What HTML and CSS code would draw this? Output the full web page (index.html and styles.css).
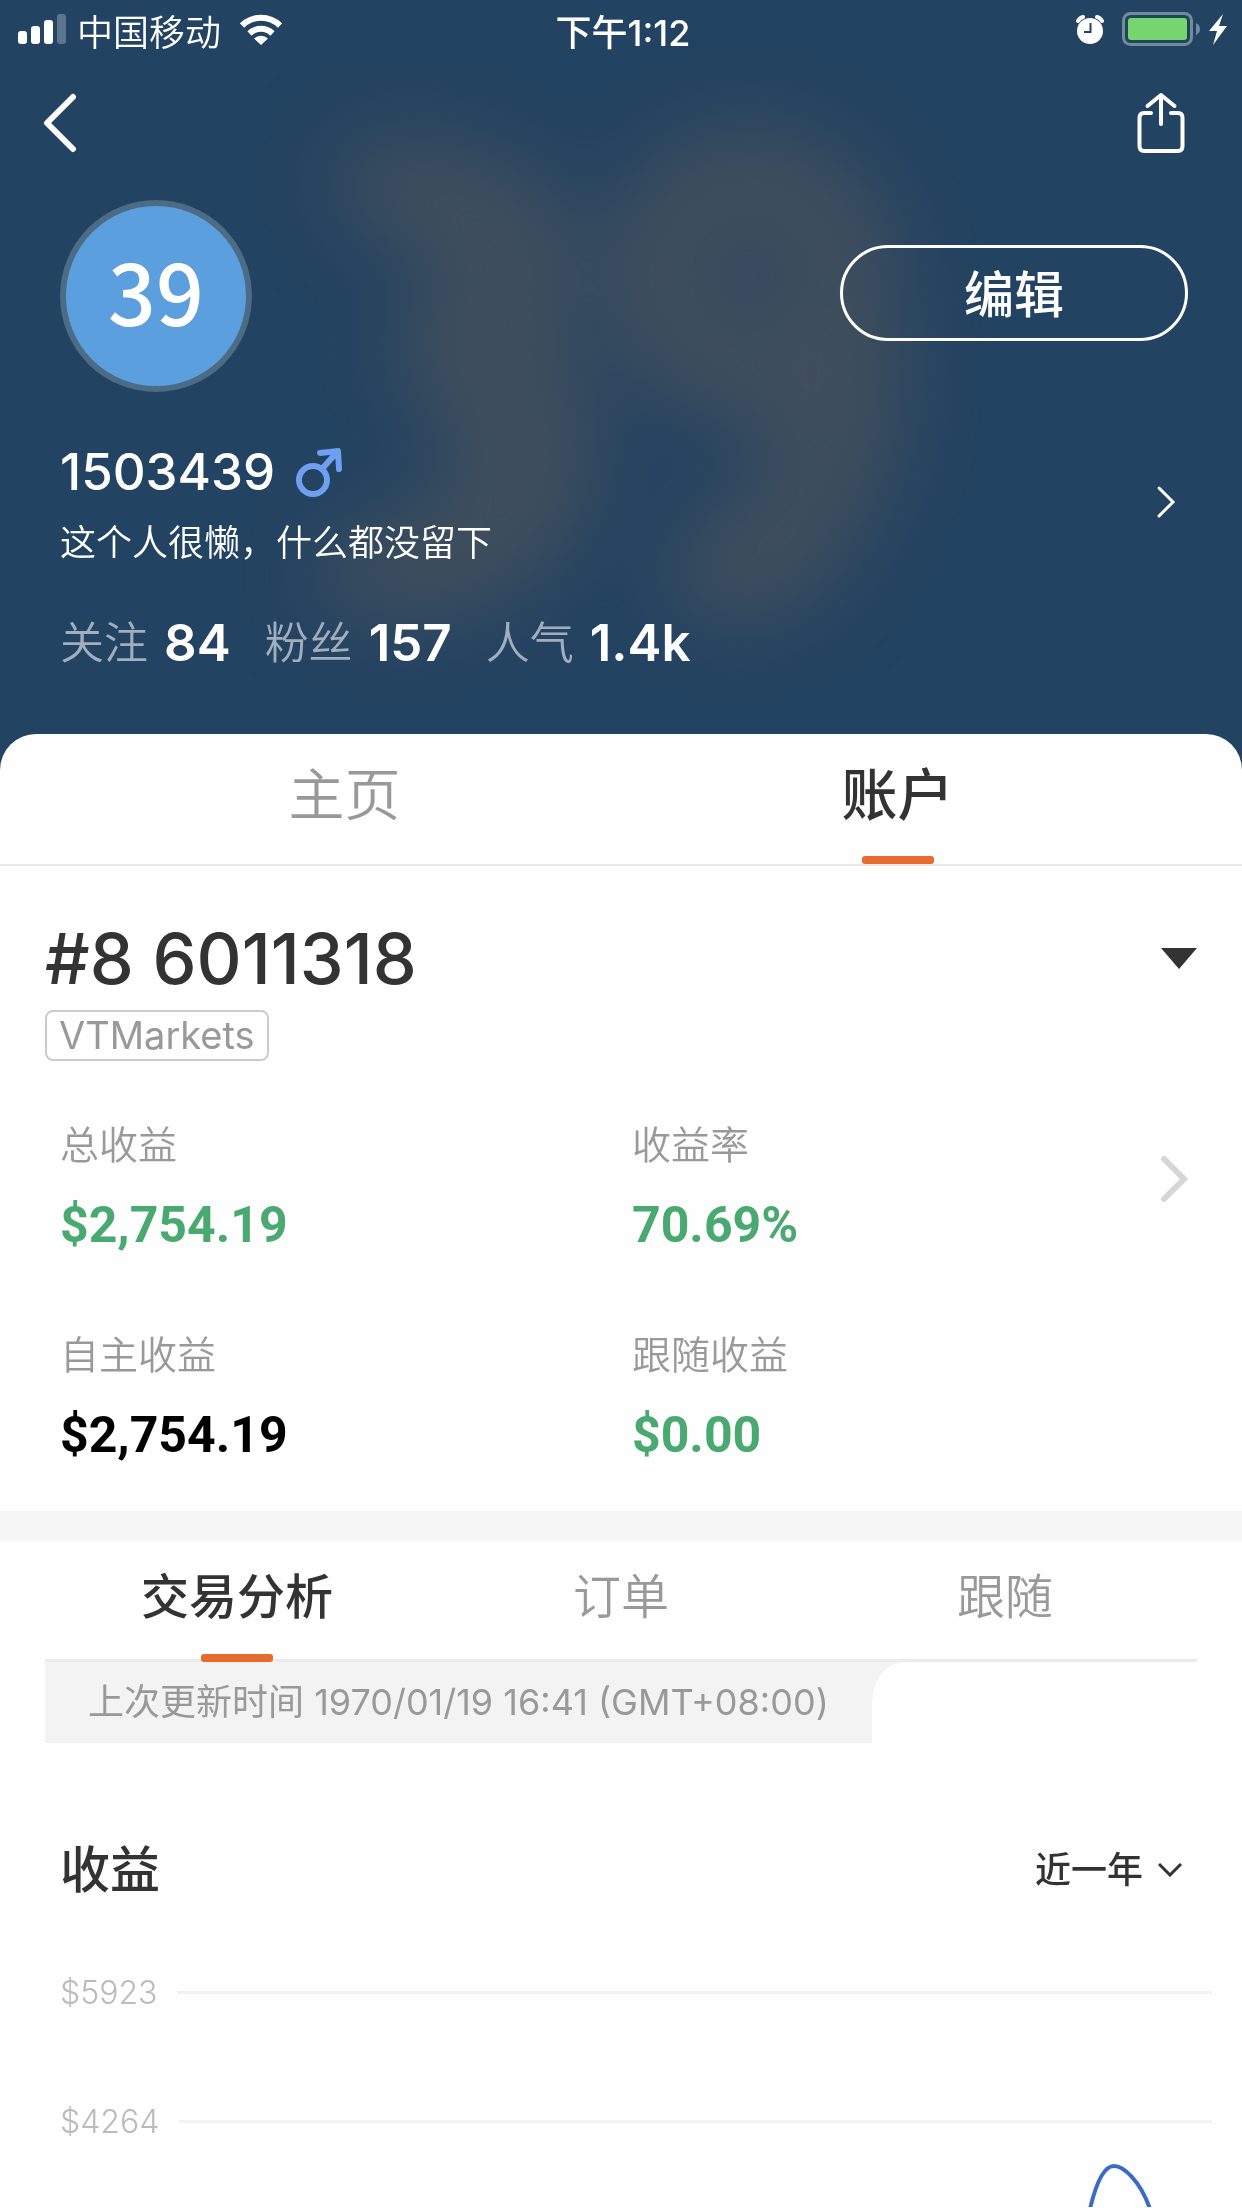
FILE: index.html
```html
<!DOCTYPE html>
<html lang="zh-CN">
<head>
<meta charset="utf-8">
<meta name="viewport" content="width=device-width, initial-scale=1">
<title>1503439</title>
<link rel="stylesheet" href="styles.css">
</head>
<body>
<header class="hero">
  <!-- soft backdrop made of blurred blobs -->
  <svg class="hero-art" viewBox="0 0 1242 776" preserveAspectRatio="xMidYMin slice" aria-hidden="true">
    <defs><filter id="soft" x="-30%" y="-30%" width="160%" height="160%" color-interpolation-filters="sRGB"><feGaussianBlur stdDeviation="42"/></filter></defs>
    <g filter="url(#soft)" fill="#414f5c">
      <ellipse cx="430" cy="195" rx="100" ry="56" transform="rotate(12 430 195)"/>
      <ellipse cx="505" cy="270" rx="70" ry="110"/>
      <ellipse cx="475" cy="350" rx="84" ry="60"/>
      <ellipse cx="520" cy="450" rx="76" ry="120"/>
      <ellipse cx="430" cy="565" rx="118" ry="54" transform="rotate(-8 430 565)"/>
      <circle cx="750" cy="275" r="92" fill="none" stroke="#414f5c" stroke-width="112"/>
      <ellipse cx="835" cy="400" rx="66" ry="150" transform="rotate(6 835 400)"/>
      <ellipse cx="760" cy="555" rx="96" ry="62" transform="rotate(-24 760 555)"/>
    </g>
  </svg>

  <div class="status">
    <div class="status-side">
      <svg width="48" height="32" viewBox="0 0 48 32" aria-hidden="true">
        <g fill="#fff"><rect x="0" y="17" width="9" height="13" rx="3"/><rect x="13" y="12" width="9" height="18" rx="3"/><rect x="26" y="6" width="9" height="24" rx="3"/></g>
        <rect x="39" y="0" width="9" height="30" rx="3" fill="#5c7690"/>
      </svg>
      <span class="carrier">中国移动</span>
      <svg width="42" height="32" viewBox="0 0 42 32" aria-hidden="true">
        <g fill="none" stroke="#fff" stroke-width="6"><path d="M2 11.500a27 27 0 0 1 38 0"/><path d="M9.500 19.500a16.500 16.500 0 0 1 23 0"/></g>
        <path fill="#fff" d="M14 24.500a10 10 0 0 1 14 0L21 31z"/>
      </svg>
    </div>
    <time class="clock">下午1:12</time>
    <div class="status-side status-right">
      <svg width="28" height="30" viewBox="0 0 28 30" aria-hidden="true">
        <circle cx="14" cy="16" r="13" fill="#fff"/>
        <path d="M2 6a8 8 0 0 1 5-4M26 6a8 8 0 0 0-5-4" stroke="#fff" stroke-width="4" stroke-linecap="round"/>
        <path d="M14.500 8v9H8" fill="none" stroke="#234362" stroke-width="2"/>
      </svg>
      <svg width="106" height="36" viewBox="0 0 106 36" aria-hidden="true">
        <rect x="1.500" y="1.500" width="68" height="31" rx="7" fill="#1c4a53" stroke="#7489a2" stroke-width="3"/>
        <rect x="6" y="6" width="59" height="22" rx="3" fill="#78d672"/>
        <path d="M74 11q4 2 4 6t-4 6z" fill="#7489a2"/>
        <path d="M101 2 87 19h8l-4 14 14-19h-8z" fill="#fff"/>
      </svg>
    </div>
  </div>

  <nav class="nav">
    <button class="icon-button" type="button" aria-label="返回">
      <svg width="34" height="60" viewBox="0 0 34 60" aria-hidden="true"><path d="M31 4 5 30l26 26" fill="none" stroke="#fff" stroke-width="6" stroke-linecap="round" stroke-linejoin="round"/></svg>
    </button>
    <button class="icon-button" type="button" aria-label="分享">
      <svg width="48" height="62" viewBox="0 0 48 62" aria-hidden="true"><path d="M14 21H7q-4.500 0-4.500 5v28q0 5 4.500 5h34q4.500 0 4.500-5V26q0-5-4.500-5h-7M24 32V3M10.500 14 24 3l13.500 11" fill="none" stroke="#fff" stroke-width="4" stroke-linecap="round" stroke-linejoin="round"/></svg>
    </button>
  </nav>

  <div class="profile-top">
    <div class="avatar">39</div>
    <button class="edit" type="button">编辑</button>
  </div>

  <a class="identity" href="#profile">
    <div>
      <h1 class="name">1503439
        <svg width="48" height="50" viewBox="0 0 48 50" role="img" aria-label="男"><g fill="none" stroke="#6f9ff0" stroke-width="6" stroke-linecap="round" stroke-linejoin="round"><circle cx="18" cy="33" r="14"/><path d="M27 22 42 5M25 6 43 4l1 18"/></g></svg>
      </h1>
      <p class="bio">这个人很懒，什么都没留下</p>
    </div>
    <svg width="20" height="40" viewBox="0 0 20 40" aria-hidden="true"><path d="M3 3 17 17 3 31" fill="none" stroke="#fff" stroke-width="3" stroke-linecap="round"/></svg>
  </a>

  <ul class="counts">
    <li>关注 <b>84</b></li>
    <li>粉丝 <b>157</b></li>
    <li>人气 <b>1.4k</b></li>
  </ul>
</header>

<main class="sheet">
  <nav class="tabs main-tabs">
    <a href="#home">主页</a>
    <a class="active" href="#account" aria-current="page">账户</a>
  </nav>

  <section class="account">
    <button class="account-picker" type="button">
      <span>#8 6011318</span>
      <svg width="36" height="22" viewBox="0 0 36 22" aria-hidden="true"><path d="M0 0h36L18 21z" fill="#333"/></svg>
    </button>
    <span class="broker">VTMarkets</span>
  </section>

  <section class="summary">
    <dl class="figures">
      <div><dt>总收益</dt><dd class="gain">$2,754.19</dd></div>
      <div><dt>收益率</dt><dd class="gain">70.69%</dd></div>
      <div><dt>自主收益</dt><dd>$2,754.19</dd></div>
      <div><dt>跟随收益</dt><dd class="gain">$0.00</dd></div>
    </dl>
    <a class="more" href="#details" aria-label="收益详情">
      <svg width="28" height="48" viewBox="0 0 28 48" aria-hidden="true"><path d="M4 4 24 24 4 44" fill="none" stroke="#d6d6d6" stroke-width="6" stroke-linecap="round"/></svg>
    </a>
  </section>

  <section class="analysis">
    <nav class="tabs sub-tabs">
      <a class="active" href="#analysis" aria-current="page">交易分析</a>
      <a href="#orders">订单</a>
      <a href="#follow">跟随</a>
    </nav>
    <div class="updated">
      <p>上次更新时间 1970/01/19 16:41 (GMT+08:00)</p>
      <svg width="36" height="44" viewBox="0 0 36 44" aria-hidden="true"><path d="M0 0h36C14 0 0 16 0 44z" fill="#f3f3f3"/></svg>
    </div>

    <div class="chart-head">
      <h2>收益</h2>
      <div class="range">
        <select aria-label="时间范围">
          <option>近一年</option>
        </select>
        <svg width="24" height="14" viewBox="0 0 24 14" aria-hidden="true"><path d="M1 1 12 12 23 1" fill="none" stroke="#333" stroke-width="3"/></svg>
      </div>
    </div>

    <div class="chart">
      <div class="tick"><span>$5923</span><i></i></div>
      <div class="tick"><span>$4264</span><i></i></div>
      <svg class="curve" width="64" height="44" viewBox="0 0 64 44" aria-hidden="true"><path d="M2 46C9 16 17 3 26 3s26 14 36 43" fill="none" stroke="#3b6bc6" stroke-width="4"/></svg>
    </div>
  </section>
</main>
</body>
</html>
```
FILE: styles.css
```css
* { box-sizing: border-box; }

body {
  margin: 0;
  background: #fefefe;
  color: #333;
  font-family: Inter, "Noto Sans CJK SC", sans-serif;
  font-size: 36px;
}

h1, h2, p, ul, dl, dd { margin: 0; padding: 0; }
ul { list-style: none; }
a { color: inherit; text-decoration: none; }
button, select { margin: 0; padding: 0; border: 0; background: none; color: inherit; font: inherit; }
svg { display: block; flex: none; }

/* Profile header */
.hero {
  position: relative;
  overflow: hidden;
  background: #234362;
  color: #fff;
  padding-bottom: 92px;
}

.hero > * { position: relative; }

.hero .hero-art {
  position: absolute;
  inset: 0;
  width: 100%;
  height: 100%;
}

.status {
  display: grid;
  grid-template-columns: 1fr auto 1fr;
  align-items: center;
  height: 60px;
  padding: 0 14px 0 18px;
}

.status-side { display: flex; align-items: center; gap: 11px; }
.carrier { margin-right: 8px; font-weight: 350; }
.status-right { justify-content: flex-end; gap: 18px; }
.clock { font-size: 36px; font-weight: 500; }

.nav {
  display: flex;
  justify-content: space-between;
  align-items: center;
  height: 126px;
  padding: 0 57px 0 42px;
}

.profile-top {
  display: flex;
  justify-content: space-between;
  align-items: center;
  margin-top: 14px;
  padding: 0 54px 0 60px;
}

.avatar {
  width: 192px;
  height: 192px;
  border: 6px solid #4c6b84;
  border-radius: 50%;
  background: #5b9fdf;
  font: 500 84px/168px "Noto Sans CJK SC", sans-serif;
  text-align: center;
}

.edit {
  width: 348px;
  height: 96px;
  margin-bottom: 6px;
  padding-bottom: 4px;
  border: 3px solid #fff;
  border-radius: 48px;
  font-size: 50px;
  font-weight: 500;
}

.identity {
  display: flex;
  justify-content: space-between;
  align-items: center;
  margin-top: 42px;
  padding: 0 66px 0 60px;
}

.name {
  display: flex;
  align-items: center;
  gap: 20px;
  font-size: 51px;
  font-weight: 500;
  line-height: 76px;
}

.bio { line-height: 66px; font-weight: 350; }

.counts {
  display: flex;
  gap: 34px;
  margin-top: 32px;
  padding: 0 60px;
  line-height: 70px;
}

.counts li { display: flex; align-items: center; gap: 16px; color: #a0aebd; font-size: 44px; font-weight: 350; }
.counts b { color: #fff; font-size: 51px; font-weight: 600; }

/* Sheet */
.sheet {
  margin-top: -36px;
  position: relative;
  border-radius: 36px 36px 0 0;
  background: #fefefe;
}

.tabs { display: grid; grid-auto-flow: column; grid-auto-columns: 1fr; color: #999; font-weight: 350; text-align: center; }
.tabs a { display: flex; flex-direction: column; align-items: center; justify-content: space-between; }
.tabs .active { color: #333; font-weight: 500; }
.tabs a::after { content: ""; width: 72px; height: 8px; border-radius: 3px; }
.tabs .active::after { background: #e76a2e; }

.main-tabs { height: 132px; padding: 0 68px; border-bottom: 2px solid #e8e8e8; font-size: 56px; line-height: 122px; }
.main-tabs a { height: 130px; }

.account { padding: 48px 45px 0; }

.account-picker {
  display: flex;
  justify-content: space-between;
  align-items: center;
  width: 100%;
  font-size: 70px;
  font-weight: 550;
  line-height: 90px;
}

.broker {
  display: block;
  width: fit-content;
  margin-top: 6px;
  padding: 0 12px;
  border: 2px solid #ccc;
  border-radius: 8px;
  color: #999;
  font-size: 38px;
  font-weight: 400;
  line-height: 47px;
}

.summary {
  display: flex;
  justify-content: space-between;
  padding: 54px 54px 42px 60px;
  border-bottom: 30px solid #f6f6f6;
}

.figures { flex: 1; display: grid; grid-template-columns: 52% 48%; row-gap: 66px; }
.figures dt { color: #999; font-size: 39px; font-weight: 350; line-height: 60px; }
.figures dd { margin-top: 16px; color: #000; font: 700 50px/68px Roboto, sans-serif; }
.figures .gain { color: #4aa970; }
.more { margin-top: 40px; }

.analysis { padding: 0 45px; }
.sub-tabs { height: 121px; border-bottom: 3px solid #ebebeb; font-size: 48px; line-height: 112px; }
.sub-tabs a { height: 121px; }

.updated { display: flex; align-items: flex-start; }
.updated p { padding: 0 43px; background: #f3f3f3; color: #999; font-weight: 400; line-height: 81px; }

.chart-head {
  display: flex;
  justify-content: space-between;
  align-items: center;
  margin-top: 82px;
  padding: 0 15px;
}

.chart-head h2 { font-size: 50px; font-weight: 500; line-height: 90px; }
.range { display: flex; align-items: center; gap: 14px; font-weight: 500; }
.range select { appearance: none; }

.chart { margin-right: -30px; padding: 32px 15px 0 15px; }
.tick { display: flex; align-items: center; gap: 20px; height: 90px; margin-bottom: 39px; color: #bbb; font-size: 32px; font-weight: 350; }
.tick i { flex: 1; height: 3px; background: #f3f3f3; }
.curve { margin: -42px 60px 0 auto; }
```
